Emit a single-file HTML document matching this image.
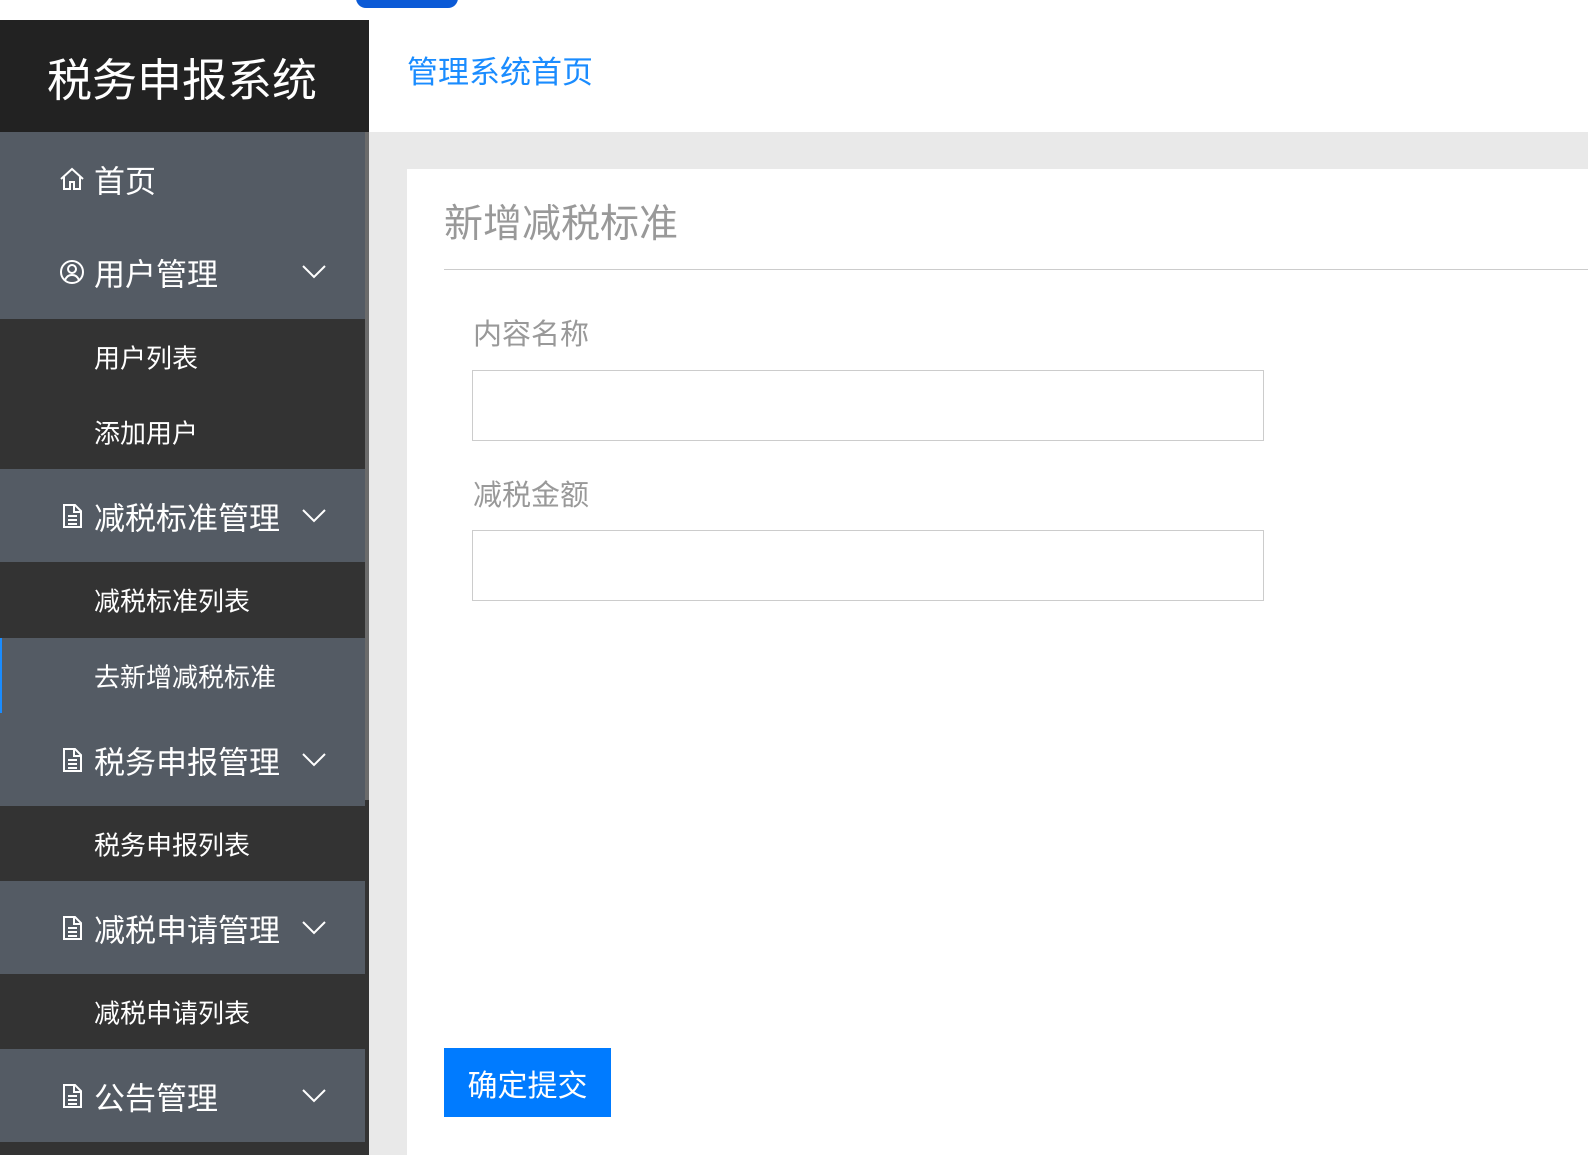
<!DOCTYPE html>
<html><head><meta charset="utf-8"><style>
*{margin:0;padding:0;box-sizing:border-box}
body{width:1588px;height:1155px;overflow:hidden;background:#e9e9e9;font-family:"Liberation Sans","Noto Sans CJK SC",sans-serif;position:relative}
.top{position:absolute;left:0;top:0;width:1588px;height:20px;background:#fff;box-shadow:0 1px 3px rgba(0,0,0,.15)}
.blob{position:absolute;left:356px;top:-12px;width:102px;height:20px;background:#0b5ad6;border-radius:10px}
.side{position:absolute;left:0;top:20px;width:369px;height:1135px;background:#333}
.logo{height:112px;background:#222;color:#fff;font-size:45px;line-height:122px;padding-left:47px}
.it{position:absolute;left:0;width:365px;background:#545b64;color:#fff;font-size:31px}
.it span.t{position:absolute;left:94px;top:50%;transform:translateY(-50%)}
.it svg.ic{position:absolute;left:59px;top:50%;transform:translateY(-50%)}
.it svg.ar{position:absolute;left:302px;top:50%;transform:translateY(-50%)}
.sub{position:absolute;left:0;width:365px;color:#fff;font-size:26px}
.sub span{position:absolute;left:94px;top:50%;transform:translateY(-50%)}
.head{position:absolute;left:369px;top:20px;width:1219px;height:112px;background:#fff}
.head a{position:absolute;left:38px;top:27px;color:#1a8cff;font-size:31px}
.card{position:absolute;left:407px;top:169px;width:1181px;height:986px;background:#fff}
.title{position:absolute;left:37px;top:24px;font-size:39px;color:#999}
.line{position:absolute;left:37px;top:100px;right:0;height:1px;background:#ccc}
.lb{position:absolute;left:66px;font-size:29px;color:#999}
.in{position:absolute;left:65px;width:792px;height:71px;border:1px solid #ccc}
.btn{position:absolute;left:37px;top:879px;width:167px;height:69px;background:#007bff;color:#fff;font-size:30px;text-align:center;line-height:77px}
</style></head><body>
<div class="top"><div class="blob"></div></div>
<div class="side">
<div class="logo">税务申报系统</div>
</div>
<div class="it" style="top:132px;height:93px"><svg class="ic" width="26" height="26" viewBox="0 0 26 26" fill="none" stroke="#fff" stroke-width="2"><path d="M2 13L13 3l11 10M5 11v12h6v-7h4v7h6V11"/></svg><span class="t">首页</span></div>
<div class="it" style="top:225px;height:94px"><svg class="ic" width="26" height="26" viewBox="0 0 26 26" fill="none" stroke="#fff" stroke-width="2"><circle cx="13" cy="13" r="11"/><circle cx="13" cy="10" r="4"/><path d="M6 21c2-4 4-5 7-5s5 1 7 5"/></svg><span class="t">用户管理</span><svg class="ar" width="24" height="14" viewBox="0 0 24 14" fill="none" stroke="#fff" stroke-width="2"><path d="M1 1l11 11L23 1"/></svg></div>
<div class="sub" style="top:319px;height:75px"><span>用户列表</span></div>
<div class="sub" style="top:394px;height:75px"><span>添加用户</span></div>
<div class="it" style="top:469px;height:93px"><svg class="ic" width="26" height="26" viewBox="0 0 26 26" fill="none" stroke="#fff" stroke-width="2"><path d="M5 2h11l6 6v16H5zM15 2v7h7M9 13h9M9 17h9M9 21h9"/></svg><span class="t">减税标准管理</span><svg class="ar" width="24" height="14" viewBox="0 0 24 14" fill="none" stroke="#fff" stroke-width="2"><path d="M1 1l11 11L23 1"/></svg></div>
<div class="sub" style="top:562px;height:76px"><span>减税标准列表</span></div>
<div class="sub" style="top:638px;height:75px;background:#545b64;border-left:2px solid #1a8cff"><span style="left:92px">去新增减税标准</span></div>
<div class="it" style="top:713px;height:93px"><svg class="ic" width="26" height="26" viewBox="0 0 26 26" fill="none" stroke="#fff" stroke-width="2"><path d="M5 2h11l6 6v16H5zM15 2v7h7M9 13h9M9 17h9M9 21h9"/></svg><span class="t">税务申报管理</span><svg class="ar" width="24" height="14" viewBox="0 0 24 14" fill="none" stroke="#fff" stroke-width="2"><path d="M1 1l11 11L23 1"/></svg></div>
<div class="sub" style="top:806px;height:75px"><span>税务申报列表</span></div>
<div class="it" style="top:881px;height:93px"><svg class="ic" width="26" height="26" viewBox="0 0 26 26" fill="none" stroke="#fff" stroke-width="2"><path d="M5 2h11l6 6v16H5zM15 2v7h7M9 13h9M9 17h9M9 21h9"/></svg><span class="t">减税申请管理</span><svg class="ar" width="24" height="14" viewBox="0 0 24 14" fill="none" stroke="#fff" stroke-width="2"><path d="M1 1l11 11L23 1"/></svg></div>
<div class="sub" style="top:974px;height:75px"><span>减税申请列表</span></div>
<div class="it" style="top:1049px;height:93px"><svg class="ic" width="26" height="26" viewBox="0 0 26 26" fill="none" stroke="#fff" stroke-width="2"><path d="M5 2h11l6 6v16H5zM15 2v7h7M9 13h9M9 17h9M9 21h9"/></svg><span class="t">公告管理</span><svg class="ar" width="24" height="14" viewBox="0 0 24 14" fill="none" stroke="#fff" stroke-width="2"><path d="M1 1l11 11L23 1"/></svg></div>
<div style="position:absolute;left:365px;top:132px;width:4px;height:668px;background:#6b6b6b"></div>
<div class="head"><a>管理系统首页</a></div>
<div class="card">
<div class="title">新增减税标准</div>
<div class="line"></div>
<div class="lb" style="top:142px">内容名称</div>
<div class="in" style="top:201px"></div>
<div class="lb" style="top:303px">减税金额</div>
<div class="in" style="top:361px"></div>
<div class="btn">确定提交</div>
</div>
</body></html>
